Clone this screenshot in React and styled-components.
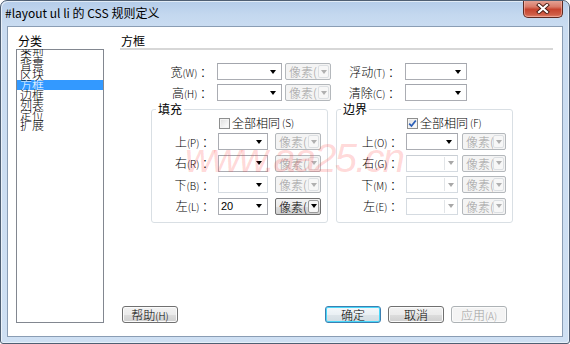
import React from "react";
import styled, { createGlobalStyle } from "styled-components";

const CJK = `"Noto Sans CJK SC", "Liberation Sans", sans-serif`;

const GlobalStyle = createGlobalStyle`
  html, body { margin: 0; padding: 0; background: #fff; }
  body { font-family: ${CJK}; font-size: 12px; font-weight: 300; }
  * { box-sizing: border-box; }
`;

const Window = styled.div`
  width: 570px;
  height: 344px;
  border: 1px solid #4f5f73;
  border-radius: 7px 7px 3px 3px;
  background: linear-gradient(180deg, #b4cce9 0px, #c4d8ef 14px, #cadcf1 26px, #cfe0f3 100%);
  display: flex;
  flex-direction: column;
  overflow: hidden;
  box-shadow: inset 1px 1px 0 rgba(255, 255, 255, 0.6), inset -1px -1px 0 rgba(255, 255, 255, 0.5);
`;

const TitleBar = styled.div`
  height: 25px;
  display: flex;
  align-items: flex-start;
  padding-left: 4px;
`;

const TitleText = styled.div`
  font-family: ${CJK};
  font-size: 12px;
  font-weight: 400;
  line-height: 24px;
  color: #000;
  white-space: nowrap;
`;

const CloseButton = styled.div`
  margin-left: auto;
  margin-right: 6px;
  margin-top: -1px;
  width: 40px;
  height: 18px;
  border: 1px solid #5e2a22;
  border-top: none;
  border-radius: 0 0 5px 5px;
  background: linear-gradient(180deg, #e6a89b 0%, #d97a68 40%, #c6432e 55%, #cf5d46 85%, #e0836d 100%);
  display: flex;
  align-items: center;
  justify-content: center;
  box-shadow: inset 0 0 0 1px rgba(255, 200, 190, 0.5);
`;

const Client = styled.div`
  position: relative;
  flex: 1;
  margin: 0 6px 6px;
  border: 1px solid #8a9db4;
  background: #fff;
  display: flex;
`;

const LeftCol = styled.div`
  width: 96px;
  padding: 6px 0 12px 8px;
  display: flex;
  flex-direction: column;
`;

const SectionLabel = styled.div`
  height: 16px;
  line-height: 16px;
  font-size: 12px;
  font-weight: 400;
  padding-left: 2px;
  color: #000;
`;

const CatList = styled.ul`
  list-style: none;
  margin: 0;
  padding: 0;
  width: 88px;
  height: 274px;
  border: 1px solid #828790;
  background: #fff;
`;

const CatItem = styled.li`
  height: 10px;
  line-height: 10px;
  font-size: 12px;
  padding-left: 3px;
  white-space: nowrap;
  color: ${(p) => (p.$selected ? "#fff" : "#000")};
  background: ${(p) => (p.$selected ? "#3399ff" : "transparent")};
`;

const RightCol = styled.div`
  flex: 1;
  margin-left: 16px;
  margin-right: 9px;
  padding: 6px 0 13px;
  display: flex;
  flex-direction: column;
`;

const Heading = styled.div`
  height: 17px;
  line-height: 15px;
  font-size: 12px;
  font-weight: 400;
  padding-left: 1px;
  border-bottom: 2px solid #d7d7d7;
  color: #000;
`;

const TopGrid = styled.div`
  margin-top: 13px;
  display: grid;
  grid-template-columns: 94px 65px 46px 68px 62px;
  grid-auto-rows: 17px;
  column-gap: 3px;
  row-gap: 4px;
  align-items: center;
`;

const FieldLabel = styled.div`
  text-align: right;
  font-size: 12px;
  line-height: 17px;
  padding-right: ${(p) => p.$pr ?? 2}px;
  white-space: nowrap;
  color: #000;
`;

const Small = styled.span`
  font-size: 10px;
`;

const Combo = styled.div`
  width: ${(p) => p.$w}px;
  height: 17px;
  border: 1px solid ${(p) => (p.$dim ? "#d5dbe1" : "#abadb3")};
  border-top-color: ${(p) => (p.$dim ? "#c9ced4" : "#a3a6ad")};
  background: #fff;
  display: flex;
  align-items: stretch;
  justify-self: ${(p) => p.$justify || "start"};
`;

const ComboValue = styled.div`
  flex: 1;
  font-family: "Liberation Sans", sans-serif;
  font-size: 11px;
  font-weight: 400;
  line-height: 15px;
  padding-left: 2px;
  color: #000;
`;

const ArrowBox = styled.div`
  width: ${(p) => (p.$sep ? 12 : 16)}px;
  display: flex;
  align-items: center;
  justify-content: center;
  border-left: ${(p) => (p.$sep ? "1px solid #e2e5e8" : "none")};
  margin: ${(p) => (p.$sep ? "1px 1px 1px 0" : "0")};
`;

const Arrow = styled.div`
  width: 0;
  height: 0;
  border-left: 3.5px solid transparent;
  border-right: 3.5px solid transparent;
  border-top: 4px solid ${(p) => p.$color || "#000"};
`;

const Unit = styled.div`
  width: ${(p) => p.$w}px;
  height: 17px;
  border: 1px solid ${(p) => (p.$on ? "#707070" : "#b4b8bc")};
  border-radius: 2px;
  background: ${(p) =>
    p.$on
      ? "linear-gradient(180deg, #f2f2f2 0%, #ebebeb 50%, #dddddd 51%, #cfcfcf 100%)"
      : "#f4f4f4"};
  display: flex;
  align-items: center;
  justify-self: ${(p) => p.$justify || "start"};
  overflow: hidden;
`;

const UnitText = styled.div`
  flex: 1;
  font-size: 12px;
  line-height: 15px;
  padding-left: 3px;
  white-space: nowrap;
  overflow: hidden;
  color: ${(p) => (p.$on ? "#000" : "#a0a0a0")};
`;

const UnitArrow = styled.div`
  width: 11px;
  height: 13px;
  margin-right: 1px;
  border: 1px solid ${(p) => (p.$on ? "#9a9a9a" : "#dcdfe2")};
  border-radius: 2px;
  background: ${(p) => (p.$on ? "#f6f6f6" : "#f7f7f7")};
  display: flex;
  align-items: center;
  justify-content: center;
`;

const FieldsetRow = styled.div`
  margin-top: 2px;
  margin-left: 31px;
  display: flex;
  gap: 8px;
`;

const Group = styled.fieldset`
  width: 177px;
  height: 120px;
  margin: 0;
  padding: 1px 0 0;
  border: 1px solid #d9dfe4;
  border-radius: 3px;
  min-width: 0;
`;

const Legend = styled.legend`
  font-size: 12px;
  font-weight: 400;
  line-height: 12px;
  padding: 0 2px;
  margin-left: 4px;
  color: #000;
`;

const CheckRow = styled.label`
  height: 14px;
  display: flex;
  align-items: center;
  gap: 2px;
  margin-left: ${(p) => p.$offset}px;
  margin-bottom: 3px;
  font-size: 12px;
  line-height: 14px;
  white-space: nowrap;
  color: #000;
`;

const CheckBox = styled.span`
  width: 11px;
  height: 11px;
  border: 1px solid #8e8f8f;
  background: linear-gradient(135deg, #dcdcdc 0%, #f6f6f6 70%, #fff 100%);
  box-shadow: inset 0 0 0 1px #f4f4f4;
  display: flex;
  align-items: center;
  justify-content: center;
`;

const GroupGrid = styled.div`
  display: grid;
  grid-template-columns: ${(p) => p.$cols};
  grid-auto-rows: 17px;
  row-gap: 4.5px;
  align-items: center;
`;

const ButtonBar = styled.div`
  margin-top: auto;
  display: flex;
  gap: 7px;
  padding: 0 46px 0 2px;
`;

const Button = styled.button`
  width: 56px;
  height: 17px;
  margin: 0;
  padding: 0;
  border: 1px solid ${(p) => (p.$primary ? "#3c7fb1" : p.disabled ? "#adb2b5" : "#707070")};
  border-radius: 3px;
  background: ${(p) =>
    p.disabled
      ? "#f4f4f4"
      : p.$primary
      ? "linear-gradient(180deg, #f4f8fb 0%, #eaf0f4 50%, #dde5ea 51%, #d2dce2 100%)"
      : "linear-gradient(180deg, #f2f2f2 0%, #ebebeb 50%, #dddddd 51%, #cfcfcf 100%)"};
  box-shadow: ${(p) => (p.$primary ? "inset 0 0 0 1px #48d7f9" : "inset 0 0 0 1px #fbfbfb")};
  font-family: ${CJK};
  font-size: 12px;
  font-weight: 300;
  line-height: 15px;
  color: ${(p) => (p.disabled ? "#a0a0a0" : "#000")};
  margin-left: ${(p) => (p.$push ? "auto" : "0")};
`;

const Watermark = styled.div`
  position: absolute;
  left: 177px;
  top: 111px;
  font-family: "Liberation Sans", sans-serif;
  font-style: italic;
  font-size: 40px;
  line-height: 40px;
  letter-spacing: -1.8px;
  color: rgba(255, 60, 60, 0.2);
  pointer-events: none;
  white-space: nowrap;
`;

const categories = ["类型", "背景", "区块", "方框", "边框", "列表", "定位", "扩展"];

function ComboBox({ w, value, dim, sep, arrowColor, justify }) {
  return (
    <Combo $w={w} $dim={dim} $justify={justify}>
      <ComboValue>{value}</ComboValue>
      <ArrowBox $sep={sep}>
        <Arrow $color={arrowColor} />
      </ArrowBox>
    </Combo>
  );
}

function UnitSelect({ w, on, justify }) {
  return (
    <Unit $w={w} $on={on} $justify={justify}>
      <UnitText $on={on}>像素(</UnitText>
      <UnitArrow $on={on}>
        <Arrow $color={on ? "#000" : "#b0b0b0"} />
      </UnitArrow>
    </Unit>
  );
}

function Check({ checked }) {
  return (
    <CheckBox>
      {checked && (
        <svg width="9" height="9" viewBox="0 0 9 9">
          <path d="M1.2 4.6 L3.5 7 L7.8 1.5" fill="none" stroke="#2a5fb8" strokeWidth="1.8" />
        </svg>
      )}
    </CheckBox>
  );
}

const paddingRows = [
  { label: "上", key: "(P)", value: "", dim: false, on: false },
  { label: "右", key: "(R)", value: "", dim: false, on: false },
  { label: "下", key: "(B)", value: "", dim: true, on: false },
  { label: "左", key: "(L)", value: "20", dim: false, on: true },
];

const marginRows = [
  { label: "上", key: "(O)", dim: false, sep: false },
  { label: "右", key: "(G)", dim: true, sep: true },
  { label: "下", key: "(M)", dim: true, sep: true },
  { label: "左", key: "(E)", dim: true, sep: true },
];

export default function App() {
  return (
    <>
      <GlobalStyle />
      <Window>
        <TitleBar>
          <TitleText>#layout ul li 的 CSS 规则定义</TitleText>
          <CloseButton>
            <svg width="14" height="11" viewBox="0 0 14 11">
              <path d="M3 2 L11 9 M11 2 L3 9" stroke="#4a1c14" strokeWidth="4" strokeLinecap="square" />
              <path d="M3 2 L11 9 M11 2 L3 9" stroke="#fff" strokeWidth="2.2" strokeLinecap="square" />
            </svg>
          </CloseButton>
        </TitleBar>
        <Client>
          <LeftCol>
            <SectionLabel>分类</SectionLabel>
            <CatList>
              {categories.map((c) => (
                <CatItem key={c} $selected={c === "方框"}>
                  {c}
                </CatItem>
              ))}
            </CatList>
          </LeftCol>
          <RightCol>
            <Heading>方框</Heading>
            <TopGrid>
              <FieldLabel>
                宽<Small>(W)</Small> ：
              </FieldLabel>
              <ComboBox w={65} />
              <UnitSelect w={46} />
              <FieldLabel>
                浮动<Small>(T)</Small> ：
              </FieldLabel>
              <ComboBox w={62} />
              <FieldLabel>
                高<Small>(H)</Small> ：
              </FieldLabel>
              <ComboBox w={65} />
              <UnitSelect w={46} />
              <FieldLabel>
                清除<Small>(C)</Small> ：
              </FieldLabel>
              <ComboBox w={62} />
            </TopGrid>
            <FieldsetRow>
              <Group>
                <Legend>填充</Legend>
                <CheckRow $offset={67}>
                  <Check />
                  全部相同<Small>(S)</Small>
                </CheckRow>
                <GroupGrid $cols="66px 50px 53px">
                  {paddingRows.map((r) => (
                    <React.Fragment key={r.key}>
                      <FieldLabel $pr={4}>
                        {r.label}
                        <Small>{r.key}</Small> ：
                      </FieldLabel>
                      <ComboBox w={50} value={r.value} dim={r.dim} />
                      <UnitSelect w={46} on={r.on} justify="end" />
                    </React.Fragment>
                  ))}
                </GroupGrid>
              </Group>
              <Group>
                <Legend>边界</Legend>
                <CheckRow $offset={70}>
                  <Check checked />
                  全部相同<Small>(F)</Small>
                </CheckRow>
                <GroupGrid $cols="69px 52px 48px">
                  {marginRows.map((r) => (
                    <React.Fragment key={r.key}>
                      <FieldLabel $pr={4}>
                        {r.label}
                        <Small>{r.key}</Small> ：
                      </FieldLabel>
                      <ComboBox
                        w={52}
                        dim={r.dim}
                        sep={r.sep}
                        arrowColor={r.sep ? "#a8a8a8" : "#000"}
                      />
                      <UnitSelect w={44} justify="end" />
                    </React.Fragment>
                  ))}
                </GroupGrid>
              </Group>
            </FieldsetRow>
            <ButtonBar>
              <Button>
                帮助<Small>(H)</Small>
              </Button>
              <Button $primary $push>
                确定
              </Button>
              <Button>取消</Button>
              <Button disabled>
                应用<Small>(A)</Small>
              </Button>
            </ButtonBar>
          </RightCol>
          <Watermark>www.aa25.cn</Watermark>
        </Client>
      </Window>
    </>
  );
}
